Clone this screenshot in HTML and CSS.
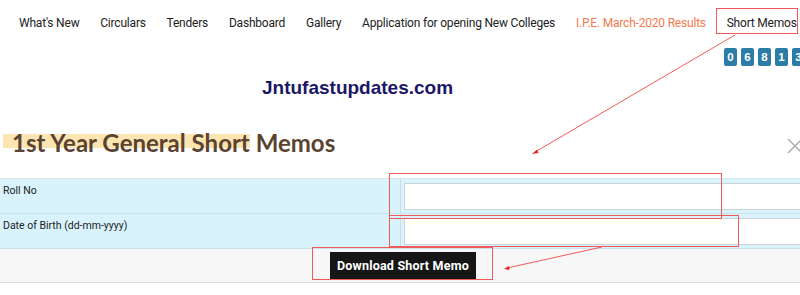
FILE: index.html
```html
<!DOCTYPE html>
<html>
<head>
<meta charset="utf-8">
<link rel="stylesheet" href="styles.css">
</head>
<body>
<div class="page">
  <nav class="nav">
    <a class="nav-item">What's New</a>
    <a class="nav-item">Circulars</a>
    <a class="nav-item">Tenders</a>
    <a class="nav-item">Dashboard</a>
    <a class="nav-item">Gallery</a>
    <a class="nav-item">Application for opening New Colleges</a>
    <a class="nav-item nav-hot">I.P.E. March-2020 Results</a>
    <a class="nav-item">Short Memos</a>
  </nav>
  <div class="counter">
    <span class="digit">0</span><span class="digit">6</span><span class="digit">8</span><span class="digit">1</span><span class="digit">3</span>
  </div>
  <div class="brand">Jntufastupdates.com</div>
  <div class="title-row">
    <h1 class="title"><span class="mark">1st Year General Short</span> Memos</h1>
    <svg class="close" width="16" height="16" viewBox="0 0 16 16"><path d="M1 1L15 15M15 1L1 15" stroke="#a8a8a8" stroke-width="1.3" fill="none"/></svg>
  </div>
  <table class="form">
    <tr class="row-blue">
      <td class="label">Roll No</td>
      <td class="field"><input class="input" type="text"></td>
    </tr>
    <tr class="row-blue">
      <td class="label">Date of Birth (dd-mm-yyyy)</td>
      <td class="field"><input class="input" type="text"></td>
    </tr>
    <tr class="row-grey">
      <td class="action" colspan="2"><button class="btn">Download Short Memo</button></td>
    </tr>
  </table>
  <svg class="notes" width="800" height="295" viewBox="0 0 800 295">
    <g stroke="#f25a5a" stroke-width="1" fill="none">
      <rect x="716.5" y="8.5" width="81" height="25"/>
      <rect x="389.5" y="173.5" width="332" height="45"/>
      <rect x="389.5" y="215.5" width="349" height="31"/>
      <rect x="312.5" y="247.5" width="180" height="32"/>
      <line x1="735" y1="35" x2="535" y2="152"/>
      <line x1="602" y1="247" x2="507" y2="268"/>
    </g>
    <g fill="#f02020">
      <polygon points="532,154 537,149.5 538.5,153"/>
      <polygon points="504,269 509,266 509.5,270"/>
    </g>
  </svg>
</div>
</body>
</html>
```
FILE: styles.css
```css
html, body {
  margin: 0;
  padding: 0;
  background: #fff;
  overflow: hidden;
}
.page {
  position: relative;
  width: 800px;
  height: 295px;
  overflow: hidden;
  font-family: Roboto, "Liberation Sans", sans-serif;
}
.nav {
  display: flex;
  align-items: center;
  height: 46px;
  padding-left: 19px;
  gap: 20.8px;
  white-space: nowrap;
}
.nav-item {
  font-size: 12px;
  color: #222;
  letter-spacing: -0.2px;
}
.nav-hot {
  color: #f47b50;
}
.counter {
  display: flex;
  gap: 4px;
  padding-left: 724px;
  margin-top: 2px;
  height: 18px;
}
.digit {
  flex: none;
  width: 13px;
  height: 18px;
  border-radius: 2px;
  background: #2b7ca6;
  color: #fff;
  font-family: "Liberation Sans", sans-serif;
  font-weight: bold;
  font-size: 11.5px;
  line-height: 18px;
  text-align: center;
}
.brand {
  margin-top: 11px;
  padding-left: 262px;
  height: 22px;
  line-height: 22px;
  font-family: "Liberation Sans", sans-serif;
  font-weight: bold;
  font-size: 19px;
  color: #1b1766;
}
.title-row {
  display: flex;
  justify-content: space-between;
  align-items: center;
  margin-top: 29px;
  height: 30px;
}
.title {
  margin: 0;
  padding-left: 3px;
  font-family: Lato, "Noto Sans", sans-serif;
  font-weight: bold;
  font-size: 24px;
  line-height: 30px;
  color: #5a4331;
  white-space: nowrap;
}
.mark {
  display: inline-block;
  padding-left: 9px;
  background: linear-gradient(to bottom, transparent 6px, #fde5b2 6px, #fde5b2 20px, transparent 20px);
}
.close {
  margin-right: -3px;
  margin-top: 6px;
}
.form {
  margin-top: 20px;
  width: 806px;
  border-collapse: collapse;
  border-top: 1px solid #dde3e6;
  border-bottom: 1px solid #dedede;
}
.row-blue {
  background: #d9f3fd;
}
.row-blue td {
  border-bottom: 1px solid #cfe2ea;
}
.label {
  width: 397px;
  height: 27px;
  padding: 5px 0 2px 3px;
  vertical-align: top;
  font-size: 10.5px;
  color: #222;
  border-right: 1px solid #c8dfe8;
}
.field {
  padding: 4px 0 3px 3px;
  vertical-align: top;
}
.input {
  display: block;
  box-sizing: border-box;
  width: 100%;
  height: 27px;
  margin: 0;
  border: 1px solid #ccd3d6;
  background: #fff;
}
.row-grey {
  background: #f7f7f7;
}
.action {
  padding: 3px 0 3px 0;
  text-align: center;
}
.btn {
  display: inline-block;
  height: 27px;
  width: 146px;
  padding: 0;
  border: none;
  border-radius: 0;
  background: #161616;
  color: #fff;
  font-family: Roboto, "Liberation Sans", sans-serif;
  font-weight: bold;
  font-size: 12.5px;
  letter-spacing: 0.2px;
  vertical-align: top;
}
.notes {
  position: absolute;
  top: 0;
  left: 0;
  pointer-events: none;
}
```
